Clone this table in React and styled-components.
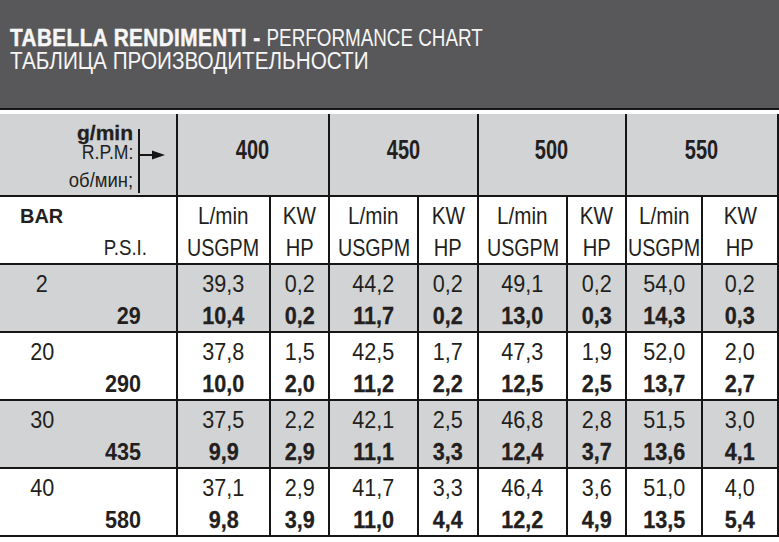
import React from 'react'
import styled, { createGlobalStyle } from 'styled-components'

const COLS = '176px 93px 59px 89px 60px 89px 59px 76px 76px'
const INK = '#231f20'
const LINE = '#161616'
const SHADE = '#d1d3d4'

const speeds = ['400', '450', '500', '550']

const rows = [
  { bar: '2', psi: '29', values: [['39,3', '0,2', '10,4', '0,2'], ['44,2', '0,2', '11,7', '0,2'], ['49,1', '0,2', '13,0', '0,3'], ['54,0', '0,2', '14,3', '0,3']] },
  { bar: '20', psi: '290', values: [['37,8', '1,5', '10,0', '2,0'], ['42,5', '1,7', '11,2', '2,2'], ['47,3', '1,9', '12,5', '2,5'], ['52,0', '2,0', '13,7', '2,7']] },
  { bar: '30', psi: '435', values: [['37,5', '2,2', '9,9', '2,9'], ['42,1', '2,5', '11,1', '3,3'], ['46,8', '2,8', '12,4', '3,7'], ['51,5', '3,0', '13,6', '4,1']] },
  { bar: '40', psi: '580', values: [['37,1', '2,9', '9,8', '3,9'], ['41,7', '3,3', '11,0', '4,4'], ['46,4', '3,6', '12,2', '4,9'], ['51,0', '4,0', '13,5', '5,4']] },
]

const App = () => {
  return (
    <Page>
      <GlobalStyle />
      <TitleBar>
        <TitleLine>
          <Squeeze $scale={0.9} $origin="left">
            <TitleBold>TABELLA RENDIMENTI - </TitleBold>
            <Squeeze $scale={0.91} $origin="left">PERFORMANCE CHART</Squeeze>
          </Squeeze>
        </TitleLine>
        <TitleLine>
          <Squeeze $scale={0.9} $origin="left">ТАБЛИЦА ПРОИЗВОДИТЕЛЬНОСТИ</Squeeze>
        </TitleLine>
      </TitleBar>

      <Table>
        <Row $shaded>
          <RpmCell>
            <RpmText>
              <RpmLine $bold $height={17}>g/min</RpmLine>
              <RpmLine $height={17} $gap={2}>
                <Squeeze $scale={0.84} $origin="right">R.P.M:</Squeeze>
              </RpmLine>
              <RpmLine $height={22} $gap={9}>
                <Squeeze $scale={0.88} $origin="right">об/мин;</Squeeze>
              </RpmLine>
            </RpmText>
            <RpmBar />
            <svg width="26" height="12" viewBox="0 0 26 12">
              <line x1="0" y1="6" x2="16" y2="6" stroke={LINE} strokeWidth="2" />
              <polygon points="12,1.5 25,6 12,10.5" fill={LINE} />
            </svg>
          </RpmCell>
          {speeds.map((s) => (
            <SpeedCell key={s}>
              <Squeeze $scale={0.74}>{s}</Squeeze>
            </SpeedCell>
          ))}
        </Row>

        <Row>
          <LabelCell>
            <BarHead>
              <Squeeze $scale={0.95} $origin="left">BAR</Squeeze>
            </BarHead>
            <PsiHead>
              <Squeeze $scale={0.85} $origin="right">P.S.I.</Squeeze>
            </PsiHead>
          </LabelCell>
          {speeds.map((s) => (
            <React.Fragment key={s}>
              <Cell>
                <Squeeze $scale={0.86}>L/min</Squeeze>
                <Squeeze $scale={0.82}>USGPM</Squeeze>
              </Cell>
              <Cell>
                <Squeeze $scale={0.86}>KW</Squeeze>
                <Squeeze $scale={0.84}>HP</Squeeze>
              </Cell>
            </React.Fragment>
          ))}
        </Row>

        {rows.map((row, i) => (
          <Row key={row.bar} $shaded={i % 2 === 0}>
            <LabelCell>
              <BarValue>
                <Squeeze $scale={0.9}>{row.bar}</Squeeze>
              </BarValue>
              <PsiValue>
                <Squeeze $scale={0.9} $origin="right">{row.psi}</Squeeze>
              </PsiValue>
            </LabelCell>
            {row.values.map(([lmin, kw, gpm, hp], j) => (
              <React.Fragment key={j}>
                <Cell>
                  <Squeeze $scale={0.9}>{lmin}</Squeeze>
                  <Squeeze $scale={0.9} $bold>{gpm}</Squeeze>
                </Cell>
                <Cell>
                  <Squeeze $scale={0.9}>{kw}</Squeeze>
                  <Squeeze $scale={0.9} $bold>{hp}</Squeeze>
                </Cell>
              </React.Fragment>
            ))}
          </Row>
        ))}
      </Table>
    </Page>
  )
}

const GlobalStyle = createGlobalStyle`
  body {
    margin: 0;
    background: #fff;
    font-family: "Liberation Sans", Arial, sans-serif;
    color: ${INK};
  }
`

// the printed chart uses a condensed grotesque; squeeze Arial-metric text to match
const Squeeze = styled('span')`
  display: inline-block;
  white-space: nowrap;
  font-weight: ${(props) => (props.$bold ? 'bold' : 'inherit')};
  -webkit-text-stroke: ${(props) => (props.$bold ? '0.3px' : '0')} currentColor;
  transform: scaleX(${(props) => props.$scale || 0.88});
  transform-origin: ${(props) => props.$origin || 'center'};
`

const Page = styled('div')`
  width: 779px;
  height: 542px;
  background: #fff;
  overflow: hidden;
`

const TitleBar = styled('div')`
  height: 81px;
  padding: 27px 10px 0 10px;
  background: #58585a;
  border-bottom: 2px solid ${LINE};
`

const TitleLine = styled('div')`
  font-size: 23px;
  line-height: 23px;
  height: 23px;
  color: #f6f6f6;
  white-space: nowrap;
`

const TitleBold = styled('strong')`
  letter-spacing: 0.5px;
  white-space: pre;
  -webkit-text-stroke: 0.5px currentColor;
`

const Table = styled('div')`
  width: 777px;
  margin-top: 4px;
  border-right: 2px solid ${LINE};
`

const Row = styled('div')`
  display: grid;
  grid-template-columns: ${COLS};
  background: ${(props) => (props.$shaded ? SHADE : '#fff')};
  border-bottom: 2px solid ${LINE};
`

const RpmCell = styled('div')`
  height: 81px;
  padding-right: 10px;
  box-sizing: border-box;
  display: flex;
  justify-content: flex-end;
  align-items: center;
`

const RpmText = styled('div')`
  align-self: flex-start;
  margin: 10px 5px 0 0;
  display: flex;
  flex-direction: column;
  align-items: flex-end;
  font-size: 21px;
`

const RpmLine = styled('div')`
  line-height: ${(props) => props.$height}px;
  margin-top: ${(props) => props.$gap || 0}px;
  font-weight: ${(props) => (props.$bold ? 'bold' : 'normal')};
  -webkit-text-stroke: ${(props) => (props.$bold ? '0.3px' : '0')} currentColor;
`

const RpmBar = styled('div')`
  align-self: stretch;
  width: 2px;
  margin: 15px 0 2px;
  background: ${LINE};
`

const SpeedCell = styled('div')`
  grid-column: span 2;
  border-left: 2px solid ${LINE};
  display: flex;
  align-items: center;
  justify-content: center;
  padding-bottom: 8px;
  font-size: 27px;
  font-weight: bold;
  -webkit-text-stroke: 0.5px currentColor;
`

const LabelCell = styled('div')`
  height: 66px;
  box-sizing: border-box;
  padding-top: 3px;
  display: flex;
  flex-direction: column;
  font-size: 24px;
  line-height: 32px;
`

const BarHead = styled('b')`
  padding-left: 20px;
  font-size: 21px;
  -webkit-text-stroke: 0.4px currentColor;
`

const PsiHead = styled('span')`
  align-self: flex-end;
  padding-right: 29px;
  font-size: 22px;
`

const BarValue = styled('span')`
  width: 84px;
  text-align: center;
`

const PsiValue = styled('b')`
  align-self: flex-end;
  padding-right: 35px;
  -webkit-text-stroke: 0.3px currentColor;
`

const Cell = styled('div')`
  height: 66px;
  box-sizing: border-box;
  padding-top: 3px;
  border-left: 2px solid ${LINE};
  display: flex;
  flex-direction: column;
  align-items: center;
  font-size: 24px;
  line-height: 32px;
`

export default App
